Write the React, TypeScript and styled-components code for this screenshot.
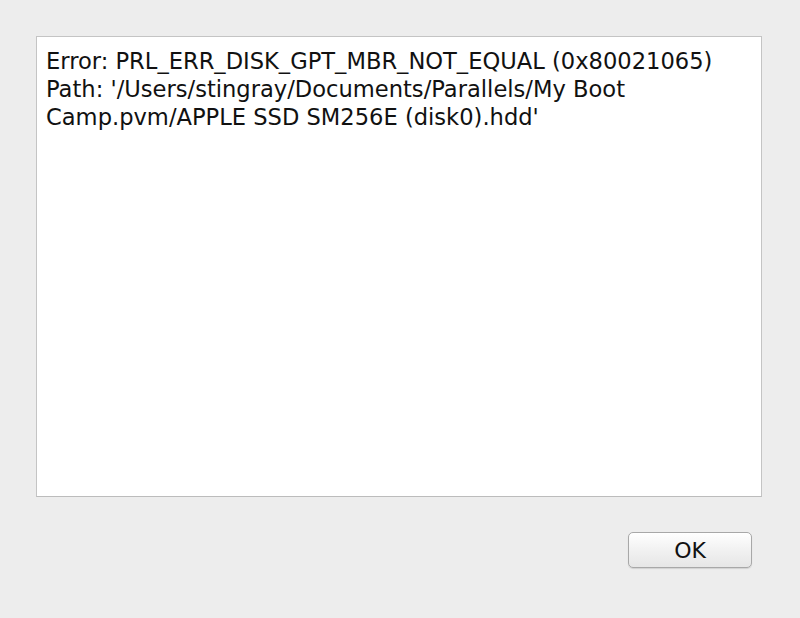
import styled, { createGlobalStyle } from "styled-components";

const GlobalStyle = createGlobalStyle`
  html, body {
    margin: 0;
    padding: 0;
    background: #ededed;
  }
  body {
    font-family: "DejaVu Sans", "Liberation Sans", sans-serif;
  }
`;

const Dialog = styled.div`
  width: 800px;
  height: 618px;
  box-sizing: border-box;
  padding: 36px 38px 0 36px;
  display: flex;
  flex-direction: column;
`;

const MessageBox = styled.div`
  height: 461px;
  box-sizing: border-box;
  background: #ffffff;
  border: 1px solid #c4c4c4;
  border-bottom-color: #bcbcbc;
  padding: 10px 9px;
  font-size: 22.6px;
  line-height: 28px;
  color: #111;
  white-space: pre-wrap;
`;

const Footer = styled.div`
  display: flex;
  justify-content: flex-end;
  padding-top: 35px;
  padding-right: 10px;
`;

const Button = styled.button`
  width: 124px;
  height: 36px;
  border: 1px solid #a8a8a8;
  border-radius: 5px;
  background: linear-gradient(#ffffff, #f0f0f0 55%, #e6e6e6);
  box-shadow: 0 1px 1px rgba(0, 0, 0, 0.12);
  font-family: "DejaVu Sans", "Liberation Sans", sans-serif;
  font-size: 22px;
  color: #111;
  padding: 0;
`;

export default function App() {
  return (
    <>
      <GlobalStyle />
      <Dialog>
        <MessageBox>
          {"Error: PRL_ERR_DISK_GPT_MBR_NOT_EQUAL (0x80021065)\nPath: '/Users/stingray/Documents/Parallels/My Boot\nCamp.pvm/APPLE SSD SM256E (disk0).hdd'"}
        </MessageBox>
        <Footer>
          <Button>OK</Button>
        </Footer>
      </Dialog>
    </>
  );
}
